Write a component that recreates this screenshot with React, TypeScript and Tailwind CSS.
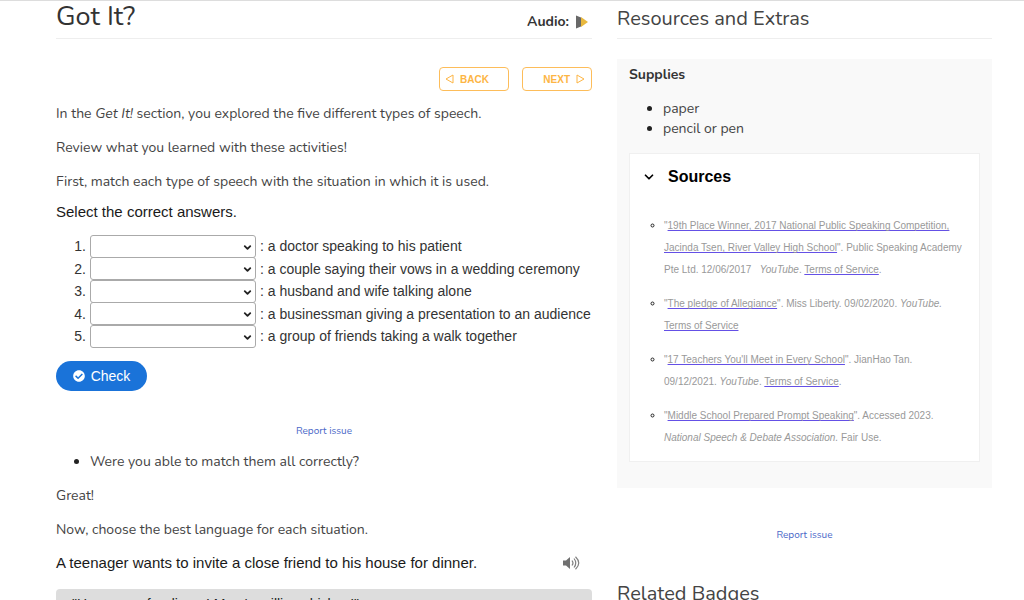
import type { ReactNode } from "react";
import { ChevronDown } from "lucide-react";
import { FaCheckCircle } from "react-icons/fa";

const situations = [
  "a doctor speaking to his patient",
  "a couple saying their vows in a wedding ceremony",
  "a husband and wife talking alone",
  "a businessman giving a presentation to an audience",
  "a group of friends taking a walk together",
];

const speechTypes = ["intimate", "casual", "consultative", "formal", "frozen"];

function Source({ children }: { children: ReactNode }) {
  return (
    <li className="mb-3 marker:text-[#222]">
      <span className="text-[#999]">{children}</span>
    </li>
  );
}

function SourceLink({ children }: { children: ReactNode }) {
  return (
    <a href="#source" className="underline decoration-[#6450e6] [text-decoration-skip-ink:none]">
      {children}
    </a>
  );
}

function ReportIssue({ className }: { className: string }) {
  return (
    <div className={className}>
      <a href="#report" className="block text-[10px] leading-4 text-[#4a68c8]">
        Report issue
      </a>
    </div>
  );
}

function Question() {
  return (
    <section className="font-['Liberation_Sans',Arial,sans-serif]">
      <h2 className="text-[15px] leading-6 text-[#1a1a1a]">Select the correct answers.</h2>
      <ol className="mt-[11px] text-sm text-[#333]">
        {situations.map((text, i) => (
          <li key={text} className="mb-px flex h-[22px] items-center even:h-[21px]">
            <span className="w-[30px] text-right">{i + 1}.</span>
            <div className="relative ml-1 w-[166px] shrink-0">
              <select
                id={`situation-${i}`}
                defaultValue=""
                className="block h-[23px] w-full appearance-none rounded-[3px] border border-[#aaa] bg-white px-1 text-sm"
              >
                <option value=""></option>
                {speechTypes.map((t) => (
                  <option key={t}>{t}</option>
                ))}
              </select>
              <ChevronDown size={11} strokeWidth={4} className="pointer-events-none absolute top-[7px] right-[3px] text-[#222]" />
            </div>
            <label htmlFor={`situation-${i}`} className="ml-1 whitespace-nowrap">
              : {text}
            </label>
          </li>
        ))}
      </ol>
      <button type="button" className="mt-3.5 flex h-[30px] w-[91px] items-center justify-center gap-[6px] rounded-full bg-[#1a73d9] text-sm text-white">
        <FaCheckCircle size={12} />
        Check
      </button>
    </section>
  );
}

export default function App() {
  return (
    <div className="h-screen overflow-hidden border-t border-[#ddd] bg-white font-[Nunito,Lato,sans-serif] text-[#444]">
      <div className="flex gap-[25px] pr-8 pl-14">
        <main className="min-w-0 flex-[536]">
          <header className="flex h-[38px] items-start justify-between border-b border-[#eee]">
            <h1 className="text-[27px] leading-8 text-[#333]">Got It?</h1>
            <div className="flex items-center gap-[7px] pt-[11px] text-sm leading-5 font-bold text-[#333]">
              Audio:
              <button type="button" aria-label="Play audio" className="mr-1">
                <svg width="12" height="14" viewBox="0 0 12 14">
                  <path d="M0 0.5 L5 2.5 V11.5 L0 13.5 Z" fill="#686868" />
                  <path d="M5 2 L12 7 L5 12 Z" fill="#e8b83e" />
                </svg>
              </button>
            </div>
          </header>
          <nav className="mt-7 flex justify-end gap-[13px] font-['Liberation_Sans',Arial,sans-serif] text-[10px] font-bold text-[#fdb544]">
            <button type="button" className="flex h-6 w-[70px] items-center gap-[6px] rounded-[4px] border border-[#fdbd5a] pl-[5px]">
              <svg width="9" height="10" viewBox="0 0 9 10" fill="none" stroke="currentColor">
                <path d="M8 1 V9 L1 5 Z" />
              </svg>
              BACK
            </button>
            <button type="button" className="flex h-6 w-[70px] items-center justify-end gap-[6px] rounded-[4px] border border-[#fdbd5a] pr-[6px]">
              NEXT
              <svg width="9" height="10" viewBox="0 0 9 10" fill="none" stroke="currentColor">
                <path d="M1 1 V9 L8 5 Z" />
              </svg>
            </button>
          </nav>
          <div className="mt-[13px] mb-2 flex flex-col gap-[14px] text-sm leading-5">
            <p>
              In the <em>Get It!</em> section, you explored the five different types of speech.
            </p>
            <p>Review what you learned with these activities!</p>
            <p>First, match each type of speech with the situation in which it is used.</p>
          </div>
          <Question />
          <ReportIssue className="mt-8 text-center" />
          <div className="mt-[13px] flex flex-col gap-[14px] text-sm leading-5">
            <ul className="list-disc pl-[34px] marker:text-[#222]">
              <li>Were you able to match them all correctly?</li>
            </ul>
            <p>Great!</p>
            <p>Now, choose the best language for each situation.</p>
          </div>
          <section className="font-['Liberation_Sans',Arial,sans-serif]">
            <div className="mt-[11px] flex items-center justify-between pr-3">
              <h2 className="text-[15px] leading-6 text-[#1a1a1a]">A teenager wants to invite a close friend to his house for dinner.</h2>
              <button type="button" aria-label="Read aloud">
                <svg width="17" height="14" viewBox="0 0 17 14" fill="none" stroke="#808080" strokeWidth="1.2">
                  <path d="M0 4.5 H3 L7 1 V13 L3 9.5 H0 Z" fill="#707070" stroke="none" />
                  <path d="M9 4.5 Q11 7 9 9.5 M11 2.5 Q14.5 7 11 11.5 M12.5 0.7 Q19 7 12.5 13.3" />
                </svg>
              </button>
            </div>
            <button type="button" className="mt-3.5 block w-full rounded-[4px] bg-[#ddd] px-4 py-[5px] text-left text-sm leading-5 text-[#222]">
              "Hey, come for dinner! Mom's grilling chicken!"
            </button>
          </section>
        </main>
        <aside className="min-w-0 flex-[375]">
          <h2 className="h-[38px] border-b border-[#eee] pt-1 text-xl leading-7">Resources and Extras</h2>
          <section className="mt-5 bg-[#f9f9f9] px-3 pt-[6px] pb-[26px]">
            <h3 className="text-sm leading-5 font-bold text-[#333]">Supplies</h3>
            <ul className="mt-3.5 list-disc pl-[34px] text-sm leading-5 marker:text-[#222]">
              <li>paper</li>
              <li>pencil or pen</li>
            </ul>
            <div className="mt-3.5 border border-[#f0f0f0] bg-white px-3 pt-[11px] font-['Liberation_Sans',Arial,sans-serif]">
              <button type="button" className="flex items-center gap-3 text-base leading-6 font-bold text-black">
                <ChevronDown size={14} strokeWidth={3} />
                Sources
              </button>
              <ul className="mt-[26px] list-[circle] pl-[22px] text-[10px] leading-[22px]">
                <Source>
                  "<SourceLink>19th Place Winner, 2017 National Public Speaking Competition, Jacinda Tsen, River Valley High School</SourceLink>". Public Speaking Academy Pte Ltd. 12/06/2017 &nbsp; <em>YouTube</em>. <SourceLink>Terms of Service</SourceLink>.
                </Source>
                <Source>
                  "<SourceLink>The pledge of Allegiance</SourceLink>". Miss Liberty. 09/02/2020. <em>YouTube.</em> <SourceLink>Terms of Service</SourceLink>
                </Source>
                <Source>
                  "<SourceLink>17 Teachers You'll Meet in Every School</SourceLink>". JianHao Tan. 09/12/2021. <em>YouTube</em>. <SourceLink>Terms of Service</SourceLink>.
                </Source>
                <Source>
                  "<SourceLink>Middle School Prepared Prompt Speaking</SourceLink>". Accessed 2023. <em>National Speech &amp; Debate Association.</em> Fair Use.
                </Source>
              </ul>
            </div>
          </section>
          <ReportIssue className="mt-[39px] text-center" />
          <h2 className="mt-[37px] text-xl leading-7">Related Badges</h2>
        </aside>
      </div>
    </div>
  );
}
